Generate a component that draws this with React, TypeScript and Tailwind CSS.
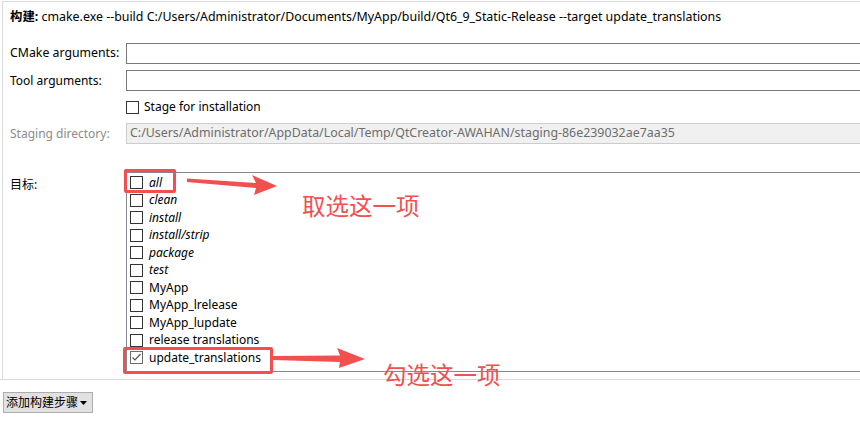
import React from "react";

const items: { label: string; italic: boolean; checked?: boolean }[] = [
  { label: "all", italic: true },
  { label: "clean", italic: true },
  { label: "install", italic: true },
  { label: "install/strip", italic: true },
  { label: "package", italic: true },
  { label: "test", italic: true },
  { label: "MyApp", italic: false },
  { label: "MyApp_lrelease", italic: false },
  { label: "MyApp_lupdate", italic: false },
  { label: "release translations", italic: false },
  { label: "update_translations", italic: false, checked: true },
];

function Box({ checked }: { checked?: boolean }) {
  return (
    <span
      className={
        "flex h-[13px] w-[13px] shrink-0 items-center justify-center border bg-white " +
        (checked ? "border-[#6b6b6b]" : "border-[#333333]")
      }
    >
      {checked && (
        <svg width="11" height="11" viewBox="0 0 11 11">
          <path d="M1.5 5.5 L4 8 L9.5 2" fill="none" stroke="#555" strokeWidth="1.2" />
        </svg>
      )}
    </span>
  );
}

export default function App() {
  return (
    <div
      className="relative h-[422px] w-[860px] overflow-hidden bg-white text-[12px] text-black"
      style={{ fontFamily: '"Noto Sans", "Noto Sans CJK SC", sans-serif' }}
    >
      <div className="mt-[1px] h-[379px] border-b border-[#d9d9d9]">
        <div className="ml-[2px] flex h-full flex-col border-l border-t border-[#d9d9d9] pl-[7px] pt-[5px]">
          <div className="flex h-[20px] items-center whitespace-nowrap text-[12.4px]">
            <span className="font-bold">构建:</span>
            <span>&nbsp;cmake.exe --build C:/Users/Administrator/Documents/MyApp/build/Qt6_9_Static-Release --target update_translations</span>
          </div>

          <div className="mt-[16px] flex h-[21px] items-center">
            <span className="w-[116px] shrink-0 text-[12.3px]">CMake arguments:</span>
            <div className="h-[21px] flex-1 border border-r-0 border-[#7a7a7a]" />
          </div>

          <div className="mt-[6px] flex h-[21px] items-center">
            <span className="w-[116px] shrink-0">Tool arguments:</span>
            <div className="h-[21px] flex-1 border border-r-0 border-[#7a7a7a]" />
          </div>

          <div className="mt-[6px] flex h-[20px] items-center">
            <span className="w-[116px] shrink-0" />
            <Box />
            <span className="ml-[5px]">Stage for installation</span>
          </div>

          <div className="mt-[6px] flex h-[21px] items-center">
            <span className="w-[116px] shrink-0 text-[#8c8c8c]">Staging directory:</span>
            <div className="flex h-[21px] flex-1 items-center whitespace-nowrap border border-r-0 border-[#cccccc] bg-[#f0f0f0] pl-[3px] text-[12.4px] text-[#6d6d6d]">
              C:/Users/Administrator/AppData/Local/Temp/QtCreator-AWAHAN/staging-86e239032ae7aa35
            </div>
          </div>

          <div className="mt-[28px] flex">
            <span className="w-[116px] shrink-0 pt-[3px] leading-[20px]">目标:</span>
            <div className="h-[200px] flex-1 border border-r-0 border-[#828790] pl-[3px] pt-[1px]">
              {items.map((it) => (
                <div key={it.label} className="flex h-[17.5px] items-center">
                  <Box checked={it.checked} />
                  <span className={"ml-[6px] whitespace-nowrap " + (it.italic ? "italic" : "")}>{it.label}</span>
                </div>
              ))}
            </div>
          </div>
        </div>
      </div>

      <div className="ml-[3px] mt-[12px] flex h-[21px] w-[90px] items-center border border-[#adadad] bg-[#e1e1e1] pl-[2px]">
        <span>添加构建步骤</span>
        <svg width="7" height="4" viewBox="0 0 7 4" className="ml-[2px]">
          <path d="M0 0 H7 L3.5 4 Z" fill="#000" />
        </svg>
      </div>

      {/* annotations */}
      <div className="absolute left-[124px] top-[169px] h-[24px] w-[52px] rounded-[2px] border-[3px] border-[#f24f4f]" />
      <div className="absolute left-[123px] top-[347px] h-[27px] w-[150px] rounded-[2px] border-[3px] border-[#f24f4f]" />
      <svg className="absolute left-0 top-0" width="860" height="422" viewBox="0 0 860 422">
        <polygon points="187,178.5 256,183 252,175 277,186 254,195 256,188 187,182" fill="#f24f4f" />
        <polygon points="273,356 340,355.5 337,348 365,359 339,368 340,362 273,360" fill="#f24f4f" />
      </svg>
      <div className="absolute left-[302px] top-[190px] text-[23.5px] leading-[30px] text-[#f24f4f]" style={{ fontFamily: '"Noto Sans CJK SC", sans-serif' }}>
        取选这一项
      </div>
      <div className="absolute left-[383px] top-[359px] text-[23.5px] leading-[30px] text-[#f24f4f]" style={{ fontFamily: '"Noto Sans CJK SC", sans-serif' }}>
        勾选这一项
      </div>
    </div>
  );
}
